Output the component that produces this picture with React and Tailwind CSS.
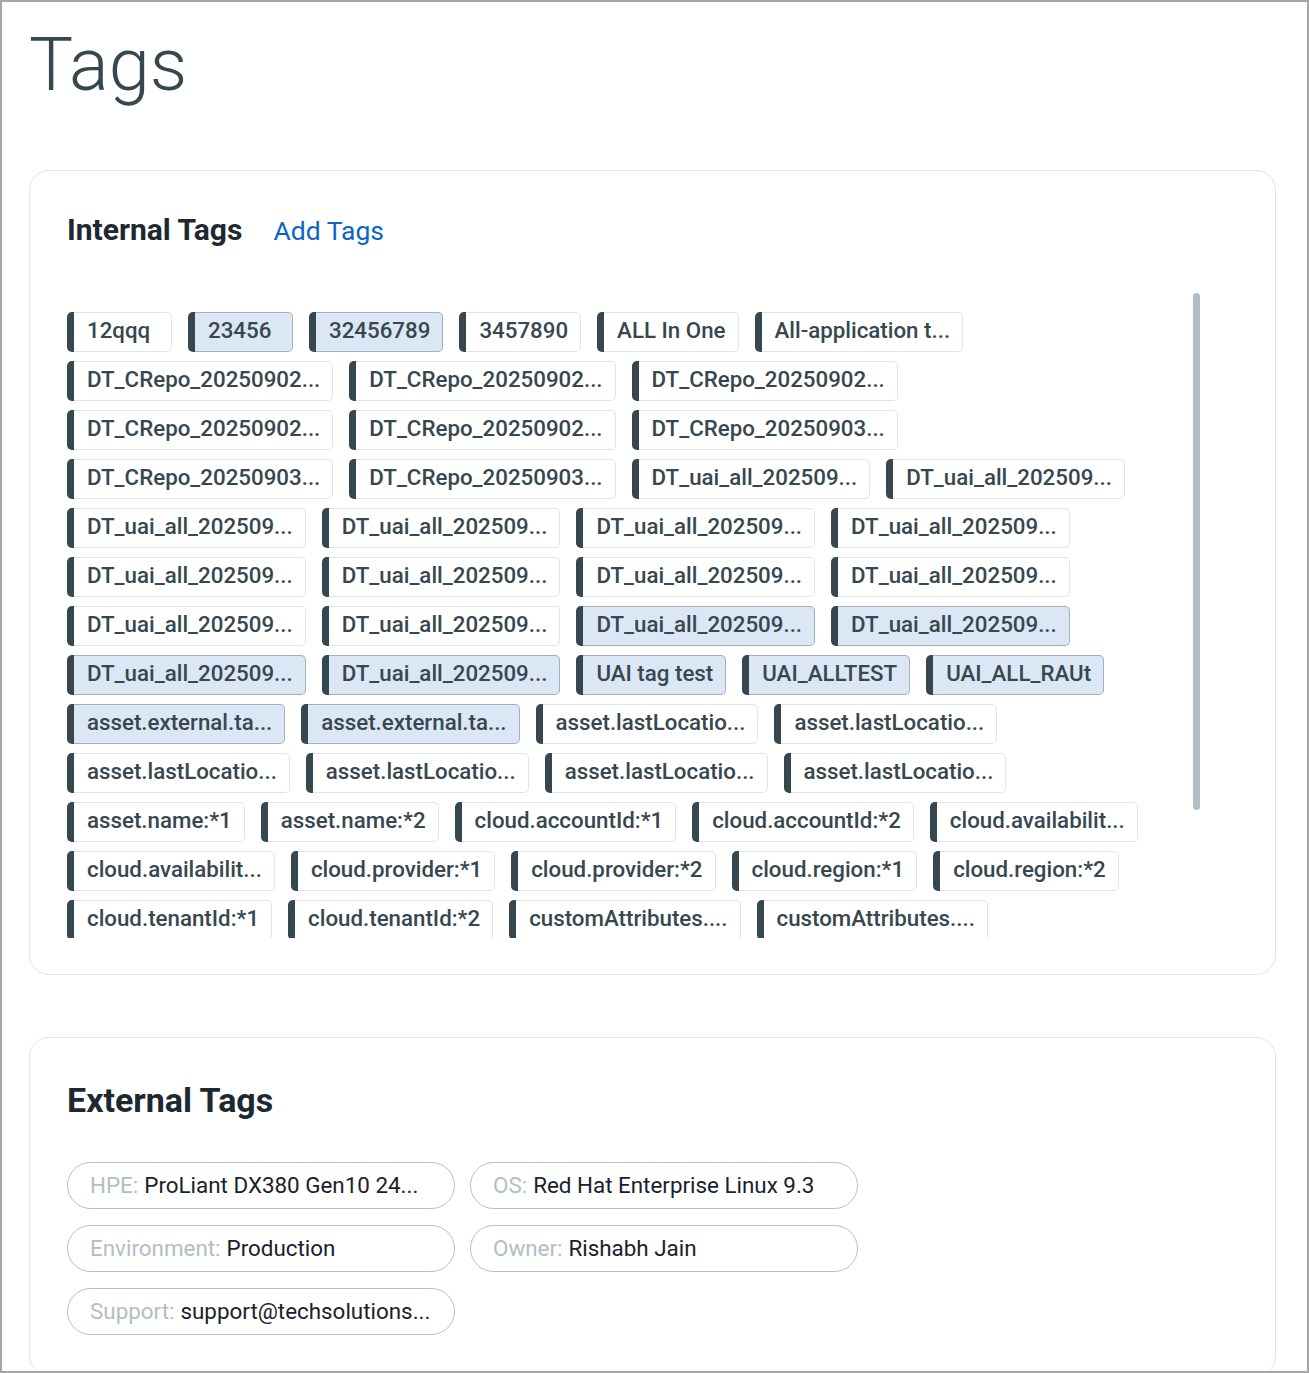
import React from "react";

const rows = [
  [["12qqq"], ["23456", 1], ["32456789", 1], ["3457890"], ["ALL In One"], ["All-application t..."]],
  [["DT_CRepo_20250902..."], ["DT_CRepo_20250902..."], ["DT_CRepo_20250902..."]],
  [["DT_CRepo_20250902..."], ["DT_CRepo_20250902..."], ["DT_CRepo_20250903..."]],
  [["DT_CRepo_20250903..."], ["DT_CRepo_20250903..."], ["DT_uai_all_202509..."], ["DT_uai_all_202509..."]],
  [["DT_uai_all_202509..."], ["DT_uai_all_202509..."], ["DT_uai_all_202509..."], ["DT_uai_all_202509..."]],
  [["DT_uai_all_202509..."], ["DT_uai_all_202509..."], ["DT_uai_all_202509..."], ["DT_uai_all_202509..."]],
  [["DT_uai_all_202509..."], ["DT_uai_all_202509..."], ["DT_uai_all_202509...", 1], ["DT_uai_all_202509...", 1]],
  [["DT_uai_all_202509...", 1], ["DT_uai_all_202509...", 1], ["UAI tag test", 1], ["UAI_ALLTEST", 1], ["UAI_ALL_RAUt", 1]],
  [["asset.external.ta...", 1], ["asset.external.ta...", 1], ["asset.lastLocatio..."], ["asset.lastLocatio..."]],
  [["asset.lastLocatio..."], ["asset.lastLocatio..."], ["asset.lastLocatio..."], ["asset.lastLocatio..."]],
  [["asset.name:*1"], ["asset.name:*2"], ["cloud.accountId:*1"], ["cloud.accountId:*2"], ["cloud.availabilit..."]],
  [["cloud.availabilit..."], ["cloud.provider:*1"], ["cloud.provider:*2"], ["cloud.region:*1"], ["cloud.region:*2"]],
  [["cloud.tenantId:*1"], ["cloud.tenantId:*2"], ["customAttributes...."], ["customAttributes...."]],
];

function Tag({ label, sel }) {
  return (
    <div className="flex h-[40px] min-w-[105px]">
      <div className="w-[7px] shrink-0 rounded-l-[5px] bg-[#37474f]" />
      <div
        className={
          sel
            ? "flex flex-1 items-center whitespace-nowrap rounded-r-[5px] border border-l-0 border-[#9fb0c1] bg-[#dbe7f4] pb-[2px] pl-[13px] pr-[12px] text-[22.3px] font-medium text-[#37474f]"
            : "flex flex-1 items-center whitespace-nowrap rounded-r-[5px] border border-l-0 border-[#e1e5e8] bg-white pb-[2px] pl-[13px] pr-[12px] text-[22.3px] font-medium text-[#37474f]"
        }
      >
        {label}
      </div>
    </div>
  );
}

const ext = [
  ["HPE:", "ProLiant DX380 Gen10 24..."],
  ["OS:", "Red Hat Enterprise Linux 9.3"],
  ["Environment:", "Production"],
  ["Owner:", "Rishabh Jain"],
  ["Support:", "support@techsolutions..."],
];

export default function App() {
  return (
    <div
      className="h-[1373px] overflow-hidden border-2 border-[#a6a6a6] bg-white pl-[27px] pr-[31px]"
      style={{ fontFamily: "Roboto, 'Liberation Sans', sans-serif" }}
    >
      <h1 className="mt-[26px] text-[74px] font-light leading-none text-[#37474f]">Tags</h1>

      <section className="mt-[68px] rounded-[20px] border border-[#e1e5e8] bg-white pb-[36px] pl-[37px] pr-[40px] pt-[44px]">
        <div className="flex items-baseline gap-[31px]">
          <h2 className="text-[30px] font-bold leading-none text-[#1e2830]">Internal Tags</h2>
          <span className="text-[26.5px] leading-none text-[#0b64c8]">Add Tags</span>
        </div>
        <div className="mt-[48px] flex h-[645px]">
          <div className="flex flex-1 flex-col gap-y-[9px] overflow-hidden pt-[19px]">
            {rows.map((r, i) => (
              <div key={i} className="flex shrink-0 gap-x-[16px]">
                {r.map(([l, s], j) => (
                  <Tag key={j} label={l} sel={!!s} />
                ))}
              </div>
            ))}
          </div>
          <div className="h-[517px] w-[7px] shrink-0 rounded-full bg-[#b0bec5]" />
          <div className="w-[35px] shrink-0" />
        </div>
      </section>

      <section className="mt-[62px] rounded-[20px] border border-[#e1e5e8] bg-white pb-[40px] pl-[37px] pr-[40px] pt-[45px]">
        <h2 className="text-[34px] font-bold leading-none text-[#1e2830]">External Tags</h2>
        <div className="mt-[45px] grid grid-cols-[388px_388px] gap-x-[15px] gap-y-[16px]">
          {ext.map(([k, v], i) => (
            <div
              key={i}
              className="flex h-[47px] items-center whitespace-nowrap rounded-full border border-[#b4c0c9] pl-[22px] text-[22.4px]"
            >
              <span className="text-[#b0bec5]">{k}</span>
              <span className="ml-[6px] text-[#18222c]">{v}</span>
            </div>
          ))}
        </div>
      </section>
    </div>
  );
}
